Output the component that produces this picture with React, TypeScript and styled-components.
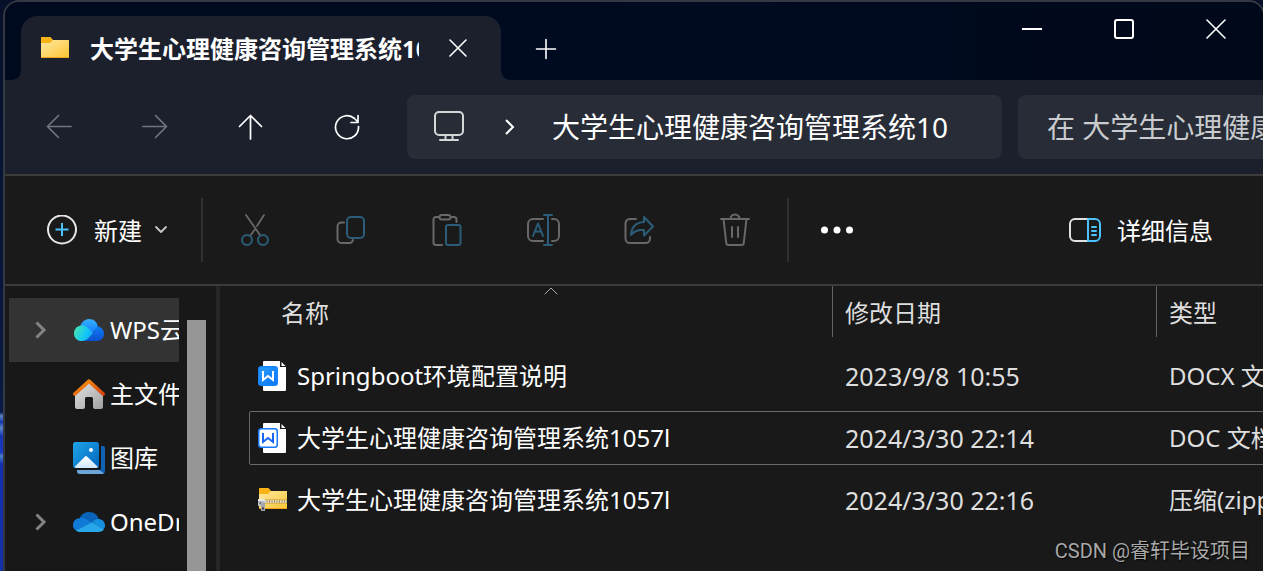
import React from "react";
import styled, { createGlobalStyle } from "styled-components";

const GlobalStyle = createGlobalStyle`
  *, *::before, *::after { box-sizing: border-box; }
  body {
    margin: 0;
    overflow: hidden;
    background: #071433;
    color: #ffffff;
    font-family: "Noto Sans", "Noto Sans CJK SC", sans-serif;
    font-size: 24px;
    line-height: 32px;
  }
  button, input {
    font: inherit;
    color: inherit;
    background: none;
    border: 0;
    padding: 0;
    margin: 0;
  }
  svg { display: block; flex: none; }
`;

const Desktop = styled.div`
  display: flex;
  min-height: 100vh;
  padding-left: 3px;
  overflow: hidden;
  background: linear-gradient(
    #061029 0, #08163a 300px, #0a1a44 412px, #5b86c4 416px, #1634b0 422px,
    #5b86c4 428px, #1634b4 436px, #1838c0 452px, #4a80cc 456px, #1230b0 464px, #1431a8 100%
  );
`;

const Window = styled.main`
  position: relative;
  flex: 1;
  min-width: 0;
  display: flex;
  flex-direction: column;
  margin-right: -2px;
  overflow: hidden;
  border: 2px solid #333843;
  border-bottom: 0;
  border-radius: 16px 16px 0 0;
  background: #191919;
`;

const TitleBar = styled.header`
  display: flex;
  align-items: flex-start;
  height: 78px;
  padding-left: 16px;
  background: linear-gradient(90deg, #000a1f, #000a20 60%, #000919);
`;

const Tab = styled.div`
  position: relative;
  display: flex;
  align-items: center;
  width: 480px;
  height: 64px;
  margin-top: 14px;
  padding-left: 19px;
  border-radius: 16px 16px 0 0;
  background: #1b202c;
  &::before, &::after {
    content: "";
    position: absolute;
    bottom: 0;
    width: 8px;
    height: 8px;
  }
  &::before {
    left: -8px;
    background: radial-gradient(circle at 0 0, transparent 7px, #1b202c 8px);
  }
  &::after {
    right: -8px;
    background: radial-gradient(circle at 100% 0, transparent 7px, #1b202c 8px);
  }
`;

const TabTitle = styled.span`
  width: 329px;
  margin-left: 20px;
  padding-top: 2px;
  overflow: hidden;
  white-space: nowrap;
  font-weight: 700;
`;

const IconButton = styled.button<{ $w: number; $h: number }>`
  display: flex;
  flex: none;
  align-items: center;
  justify-content: center;
  width: ${(p) => p.$w}px;
  height: ${(p) => p.$h}px;
`;

const NewTabSlot = styled.div`
  margin-top: 15px;
`;

const WindowControls = styled.div`
  display: flex;
  margin: 0 1px 0 auto;
`;

const NavBar = styled.nav`
  display: flex;
  align-items: center;
  height: 96px;
  padding-left: 6px;
  border-bottom: 2px solid #3b3b3b;
  background: #1b202c;
`;

const AddressBar = styled.div`
  display: flex;
  flex: 1;
  align-items: center;
  height: 64px;
  min-width: 0;
  margin: 0 16px 0 12px;
  padding-left: 24px;
  overflow: hidden;
  border-radius: 8px;
  background: #272c37;
`;

const Crumb = styled.button`
  font-size: 28px;
  white-space: nowrap;
`;

const SearchBox = styled.input`
  width: 245px;
  height: 64px;
  padding-left: 29px;
  border-radius: 8px 0 0 8px;
  background: #272c37;
  font-size: 28px;
  &::placeholder { color: #c9cbce; opacity: 1; }
`;

const Toolbar = styled.div`
  display: flex;
  align-items: center;
  height: 110px;
  padding: 0 50px 0 42px;
  border-bottom: 2px solid #3b3b3b;
  background: #1a1a1a;
`;

const LabelButton = styled.button`
  display: flex;
  align-items: center;
  gap: 16px;
  height: 64px;
  white-space: nowrap;
`;

const NewButton = styled(LabelButton)`
  gap: 12px;
  width: 154px;
`;

const DetailsButton = styled(LabelButton)`
  margin-left: auto;
`;

const ToolLabel = styled.span<{ $inset?: number }>`
  padding-top: 2px;
  padding-left: ${(p) => p.$inset ?? 0}px;
`;

const Separator = styled.i`
  flex: none;
  width: 2px;
  height: 64px;
  background: #303030;
`;

const Actions = styled.div`
  display: flex;
  margin: 0 4px;
`;

const Body = styled.div`
  display: flex;
  flex: 1;
  min-height: 0;
`;

const Sidebar = styled.aside`
  display: flex;
  flex: none;
  width: 215px;
  padding-left: 4px;
  border-right: 4px solid #262626;
  background: #181818;
`;

const SideList = styled.ul`
  width: 170px;
  margin: 0;
  padding: 12px 0 0;
  list-style: none;
`;

const SideItem = styled.li<{ $active?: boolean }>`
  display: flex;
  align-items: center;
  height: 64px;
  overflow: hidden;
  white-space: nowrap;
  background: ${(p) => (p.$active ? "#333333" : "transparent")};
`;

const ChevronSlot = styled.span`
  display: flex;
  flex: none;
  justify-content: center;
  width: 64px;
`;

const SideLink = styled.a`
  display: flex;
  align-items: center;
  gap: 5px;
  color: inherit;
  text-decoration: none;
`;

const ScrollThumb = styled.div`
  width: 19px;
  margin: 34px 0 0 8px;
  background: #969696;
`;

const FilePane = styled.section`
  flex: 1;
  min-width: 0;
  padding-left: 29px;
  overflow: hidden;
`;

const FileTable = styled.table`
  width: 1147px;
  margin-top: -8px;
  table-layout: fixed;
  border-collapse: separate;
  border-spacing: 0 8px;
  white-space: nowrap;
`;

const HeadCell = styled.th<{ $w: number }>`
  width: ${(p) => p.$w}px;
  height: 55px;
  padding: 0;
  vertical-align: top;
  text-align: left;
  font-weight: 400;
  color: #dedede;
`;

const HeadLabel = styled.div<{ $first?: boolean }>`
  position: relative;
  display: flex;
  align-items: center;
  height: 51px;
  margin-left: ${(p) => (p.$first ? 20 : 0)}px;
  padding: 2px 0 0 12px;
  border-left: ${(p) => (p.$first ? 0 : 1)}px solid #636363;
`;

const SortMark = styled.span`
  position: absolute;
  top: 0;
  left: 0;
  right: 0;
  display: flex;
  justify-content: center;
`;

const FileRow = styled.tr<{ $focused?: boolean }>`
  height: 54px;
  outline: ${(p) => (p.$focused ? "1px solid #696969" : "none")};
  outline-offset: -1px;
  border-radius: 2px;
`;

const Cell = styled.td<{ $numeric?: boolean }>`
  padding: 0 0 0 13px;
  font-size: ${(p) => (p.$numeric ? 25 : 24)}px;
  color: #dedede;
`;

const NameCell = styled.td`
  padding: 0 0 0 9px;
`;

const FileName = styled.div`
  display: flex;
  align-items: center;
  gap: 9px;
`;

const Watermark = styled.span`
  position: absolute;
  right: 13px;
  bottom: 4px;
  font-family: Roboto, "Noto Sans CJK SC", sans-serif;
  font-size: 20px;
  color: #a8a8a8;
  text-shadow: 1px 1px 1px #000000;
`;

type StrokeProps = {
  w: number;
  h: number;
  color?: string;
  sw?: number;
  children: React.ReactNode;
};

const Stroke = ({ w, h, color = "#ffffff", sw = 2, children }: StrokeProps) => (
  <svg
    width={w}
    height={h}
    viewBox={`0 0 ${w} ${h}`}
    fill="none"
    stroke={color}
    strokeWidth={sw}
    strokeLinecap="round"
    strokeLinejoin="round"
    aria-hidden="true"
  >
    {children}
  </svg>
);

const GREY = "#686868";
const BLUE = "#2b5d78";

const FolderShape = ({ id }: { id: string }) => (
  <>
    <defs>
      <linearGradient id={id} x1="0" y1="0" x2="1" y2="1">
        <stop offset="0" stopColor="#ffe9a6" />
        <stop offset="1" stopColor="#fcc430" />
      </linearGradient>
    </defs>
    <path d="M1 1.500q0-.5.5-.5h9l2.500 3h16v10H1z" fill="#f9b317" />
    <path d="M1 7h9l3-3h16v18H1z" fill={`url(#${id})`} />
    <path d="M1 21.500h28" stroke="#efa51c" strokeWidth="1" />
  </>
);

const FolderIcon = () => (
  <svg width="30" height="24" viewBox="0 0 30 24" aria-hidden="true">
    <FolderShape id="tabFolder" />
  </svg>
);

const ZipIcon = () => (
  <svg width="30" height="26" viewBox="0 0 30 26" aria-hidden="true">
    <FolderShape id="zipFolder" />
    <path d="M6 13h23M6 16h23" stroke="#c39a3c" strokeWidth="1" />
    <path d="M6 14.500h23" stroke="#efe9d4" strokeWidth="2" />
    <path d="M6 14.500h23" stroke="#8a8470" strokeWidth="2" strokeDasharray="1 1.500" />
    <path d="M0 12h7v7H0z" fill="#b9bcc0" />
    <path d="M0 12h7v2H0z" fill="#e6e7e9" />
    <path d="M1.500 15h2v2h-2z" fill="#6c6f73" />
    <path d="M3 16h4v8H3z" fill="#a3a6aa" />
    <path d="M4 20.500h2v2H4z" fill="#3c3f43" />
  </svg>
);

const DocIcon = ({ outlined }: { outlined?: boolean }) => (
  <svg width="30" height="32" viewBox="0 0 30 32" aria-hidden="true">
    <defs>
      <linearGradient id="docBadge" x1="0" y1="0" x2="1" y2="1">
        <stop offset="0" stopColor="#28a0ff" />
        <stop offset="1" stopColor="#0b72f5" />
      </linearGradient>
    </defs>
    <path d="M6 1H22v6h6v23a1 1 0 0 1-1 1H6a1 1 0 0 1-1-1V2a1 1 0 0 1 1-1z" fill="#ffffff" />
    <path d="M23.500 2l4 4h-4z" fill="#ffffff" />
    <rect
      x="0.750"
      y="6.750"
      width="18.500"
      height="18.500"
      rx="2.500"
      fill={outlined ? "#ffffff" : "url(#docBadge)"}
      stroke={outlined ? "#1677ff" : "#1784fb"}
      strokeWidth="1.500"
    />
    <path
      d="M5 11v9l5-4 5 4v-9"
      fill="none"
      stroke={outlined ? "#1b66ee" : "#ffffff"}
      strokeWidth="2"
    />
  </svg>
);

const CloudWps = () => (
  <svg width="32" height="24" viewBox="0 0 32 24" aria-hidden="true">
    <defs>
      <linearGradient id="wpsTop" x1="0" y1="0" x2="0" y2="1">
        <stop offset="0" stopColor="#35b2ff" />
        <stop offset="1" stopColor="#1478ff" />
      </linearGradient>
      <linearGradient id="wpsLeft" x1="0" y1="0.300" x2="1" y2="0.700">
        <stop offset="0" stopColor="#43e4b0" />
        <stop offset="0.600" stopColor="#14c8f5" />
        <stop offset="1" stopColor="#10a6ff" />
      </linearGradient>
      <linearGradient id="wpsRight" x1="0" y1="0" x2="0" y2="1">
        <stop offset="0" stopColor="#0d7df5" />
        <stop offset="1" stopColor="#0b4fd0" />
      </linearGradient>
    </defs>
    <path d="M7 8.500C8.500 4 12 1 16 1c5 0 8.500 3.500 8.800 8L18 16z" fill="url(#wpsTop)" />
    <path d="M10 23c8-1 10-11 14.500-14.500 4 .5 6.500 3.500 6.500 7.200 0 4.200-3 7.300-7.300 7.300z" fill="url(#wpsRight)" />
    <path d="M8.500 7.500c4 0 5.500 1.500 7.500 3.500l4 4C16.500 19 14.500 23 9 23c-5 0-8-3.300-8-7.600s3.300-7.900 7.500-7.900z" fill="url(#wpsLeft)" />
  </svg>
);

const OneDriveIcon = () => (
  <svg width="32" height="22" viewBox="0 0 32 22" aria-hidden="true">
    <path d="M6.500 7.500C8 3.500 11.500 1 16 1c5 0 8.500 2.800 9.600 7L19 12z" fill="#0a63b8" />
    <path d="M6.500 7.200c3-.4 5.500 0 8 1.700l5.500 3.200L3 19.500C1 18.200 0 16.500 0 14c0-3.800 2.800-6.600 6.500-6.800z" fill="#0f7bd6" />
    <path d="M25 8c4 0 7 2.700 7 6.500 0 1.500-.4 2.700-1.200 3.800L19 11.800C20.500 9.500 22.500 8 25 8z" fill="#1490df" />
    <path d="M19 11.500l11.900 6.700C29.800 20 28 21 25.500 21H7.500c-1.800 0-3.300-.5-4.700-1.500z" fill="#28a8ea" />
  </svg>
);

const HomeIcon = () => (
  <svg width="32" height="32" viewBox="0 0 32 32" aria-hidden="true">
    <defs>
      <linearGradient id="homeWall" x1="0" y1="0" x2="1" y2="1">
        <stop offset="0" stopColor="#e4e4e4" />
        <stop offset="1" stopColor="#a2a2a2" />
      </linearGradient>
      <linearGradient id="homeRoof" x1="0" y1="0" x2="1" y2="1">
        <stop offset="0" stopColor="#f7960e" />
        <stop offset="1" stopColor="#d8430c" />
      </linearGradient>
    </defs>
    <path d="M2 14L16 3l14 11v15a2 2 0 0 1-2 2h-6a2 2 0 0 1-2-2V20.500a1.500 1.500 0 0 0-1.500-1.500h-5a1.500 1.500 0 0 0-1.500 1.500V29a2 2 0 0 1-2 2H4a2 2 0 0 1-2-2z" fill="url(#homeWall)" />
    <path d="M1.800 16L16 3.200 30.200 16" fill="none" stroke="url(#homeRoof)" strokeWidth="3.600" strokeLinecap="round" strokeLinejoin="round" />
  </svg>
);

const GalleryIcon = () => (
  <svg width="32" height="32" viewBox="0 0 32 32" aria-hidden="true">
    <defs>
      <linearGradient id="galSky" x1="0" y1="0" x2="1" y2="1">
        <stop offset="0" stopColor="#1fa5e8" />
        <stop offset="1" stopColor="#0464bd" />
      </linearGradient>
      <linearGradient id="galHill" x1="0" y1="0" x2="0" y2="1">
        <stop offset="0" stopColor="#ffffff" />
        <stop offset="1" stopColor="#cfe8fb" />
      </linearGradient>
    </defs>
    <path d="M28 4h2a2 2 0 0 1 2 2v23a3 3 0 0 1-3 3H7a3 3 0 0 1-3-3v-1h22a2 2 0 0 0 2-2z" fill="#0f62b3" />
    <path d="M4 28h22l5 3.200a3 3 0 0 1-2 .8H7a3 3 0 0 1-3-3z" fill="#6ea5d8" />
    <rect width="26" height="26" rx="2.500" fill="url(#galSky)" />
    <path d="M1.500 25L12 14.500a1.500 1.500 0 0 1 2 0L25 25a3 3 0 0 1-1.500 1h-20a3 3 0 0 1-2-1z" fill="url(#galHill)" />
    <circle cx="18" cy="8" r="2" fill="#ffffff" />
  </svg>
);

const SideChevron = () => (
  <Stroke w={14} h={20} color="#828282" sw={3}>
    <path d="M2.500 2.500L10 10l-7.500 7.500" strokeLinecap="butt" strokeLinejoin="miter" />
  </Stroke>
);

const actions = [
  {
    label: "剪切",
    icon: (
      <Stroke w={32} h={34} color={GREY} sw={2}>
        <path d="M7 2l14 20M25 2l-7 11M15.500 17L11 23" strokeWidth="1.800" />
        <circle cx="8" cy="27" r="5" stroke={BLUE} />
        <circle cx="24" cy="27" r="5" stroke={BLUE} />
      </Stroke>
    ),
  },
  {
    label: "复制",
    icon: (
      <Stroke w={32} h={32} color={GREY}>
        <path d="M9 8.500H6.500a4 4 0 0 0-4 4V25a4 4 0 0 0 4 4H14a4 4 0 0 0 4-3" />
        <rect x="12" y="3" width="17" height="21" rx="4" stroke={BLUE} />
      </Stroke>
    ),
  },
  {
    label: "粘贴",
    icon: (
      <Stroke w={32} h={34} color={GREY}>
        <path d="M8 4H5a2.500 2.500 0 0 0-2.500 2.500v23A2.500 2.500 0 0 0 5 32h6M20 4h3a2.500 2.500 0 0 1 2.500 2.500V9" />
        <rect x="8.500" y="2" width="11" height="4.500" rx="2.200" />
        <rect x="15" y="12" width="14.500" height="20" rx="2" stroke={BLUE} />
      </Stroke>
    ),
  },
  {
    label: "重命名",
    icon: (
      <Stroke w={34} h={34} color={GREY}>
        <path d="M17 6H7a5 5 0 0 0-5 5v12a5 5 0 0 0 5 5h10M26 6h2a5 5 0 0 1 5 5v12a5 5 0 0 1-5 5h-2" />
        <path d="M22 2v30M18 2h8M18 32h8M7 23l5-12.500L17 23M9 18.500h6" stroke={BLUE} />
      </Stroke>
    ),
  },
  {
    label: "共享",
    icon: (
      <Stroke w={32} h={34} color={GREY}>
        <path d="M13 6H7a4.500 4.500 0 0 0-4.500 4.500v15A4.500 4.500 0 0 0 7 30h15.500a4.500 4.500 0 0 0 4.500-4.500V24" />
        <path d="M21 4l9 9.500-9 9v-5.500c-5.500-.5-10 1-13 5 .5-7.500 5-12.500 13-13z" stroke={BLUE} />
      </Stroke>
    ),
  },
  {
    label: "删除",
    icon: (
      <Stroke w={32} h={34} color={GREY}>
        <path d="M2 6h28M11.500 6a4.500 4.500 0 0 1 9 0M4.500 6l2.700 23.500A2.500 2.500 0 0 0 9.700 32h12.600a2.500 2.500 0 0 0 2.500-2.500L27.500 6M13 14v10M19 14v10" />
      </Stroke>
    ),
  },
];

const places = [
  { name: "WPS云盘", icon: <CloudWps />, expandable: true, active: true },
  { name: "主文件夹", icon: <HomeIcon /> },
  { name: "图库", icon: <GalleryIcon /> },
  { name: "OneDrive", icon: <OneDriveIcon />, expandable: true },
];

const files = [
  { name: "Springboot环境配置说明", date: "2023/9/8 10:55", type: "DOCX 文档", icon: <DocIcon /> },
  { name: "大学生心理健康咨询管理系统1057l", date: "2024/3/30 22:14", type: "DOC 文档", icon: <DocIcon outlined />, focused: true },
  { name: "大学生心理健康咨询管理系统1057l", date: "2024/3/30 22:16", type: "压缩(zipped)文件夹", icon: <ZipIcon /> },
];

export default function App() {
  return (
    <>
      <GlobalStyle />
      <Desktop>
        <Window>
          <TitleBar>
            <Tab>
              <FolderIcon />
              <TabTitle>大学生心理健康咨询管理系统10</TabTitle>
              <IconButton $w={78} $h={64} aria-label="关闭标签页">
                <Stroke w={20} h={20} sw={1.6}>
                  <path d="M2 2l16 16M18 2L2 18" />
                </Stroke>
              </IconButton>
            </Tab>
            <NewTabSlot>
              <IconButton $w={90} $h={64} aria-label="新建标签页">
                <Stroke w={22} h={22} sw={1.6}>
                  <path d="M11 1.500v19M1.500 11h19" />
                </Stroke>
              </IconButton>
            </NewTabSlot>
            <WindowControls>
              <IconButton $w={92} $h={54} aria-label="最小化">
                <Stroke w={22} h={22}>
                  <path d="M1 11h20" strokeLinecap="butt" />
                </Stroke>
              </IconButton>
              <IconButton $w={92} $h={54} aria-label="最大化">
                <Stroke w={22} h={22}>
                  <rect x="2" y="2" width="18" height="18" rx="2" />
                </Stroke>
              </IconButton>
              <IconButton $w={92} $h={54} aria-label="关闭">
                <Stroke w={22} h={22} sw={1.6}>
                  <path d="M2 2l18 18M20 2L2 20" />
                </Stroke>
              </IconButton>
            </WindowControls>
          </TitleBar>

          <NavBar>
            <IconButton $w={96} $h={64} aria-label="后退">
              <Stroke w={26} h={26} color="#70747d" sw={1.7}>
                <path d="M25 12.500H2M12.500 1.500l-11 11 11 11" />
              </Stroke>
            </IconButton>
            <IconButton $w={96} $h={64} aria-label="前进">
              <Stroke w={26} h={26} color="#70747d" sw={1.7}>
                <path d="M1 12.500h23M13.500 1.500l11 11-11 11" />
              </Stroke>
            </IconButton>
            <IconButton $w={96} $h={64} aria-label="向上">
              <Stroke w={26} h={26} sw={1.7}>
                <path d="M12.500 25V2M1.500 12.500l11-11 11 11" />
              </Stroke>
            </IconButton>
            <IconButton $w={96} $h={64} aria-label="刷新">
              <Stroke w={26} h={26} sw={1.7}>
                <path d="M24.500 12.500A11.500 11.500 0 1 1 20.500 4.500l3.500 3.500M24 1.500v7h-7" />
              </Stroke>
            </IconButton>
            <AddressBar>
              <Stroke w={36} h={34} color="#d5d6d8" sw={2}>
                <rect x="4" y="2" width="28" height="23" rx="4" />
                <path d="M9 30h18M14.500 25v5M21.500 25v5" />
              </Stroke>
              <IconButton $w={85} $h={64} aria-label="展开路径">
                <Stroke w={12} h={18}>
                  <path d="M2 2l7 7-7 7" strokeLinecap="butt" strokeLinejoin="miter" />
                </Stroke>
              </IconButton>
              <Crumb>大学生心理健康咨询管理系统10</Crumb>
            </AddressBar>
            <SearchBox aria-label="搜索" placeholder="在 大学生心理健康咨询管理系统10 中搜索" />
          </NavBar>

          <Toolbar>
            <NewButton>
              <Stroke w={30} h={30} color="#e6e6e6">
                <circle cx="15" cy="14.500" r="14" />
                <path d="M15 8v13M8.500 14.500h13" stroke="#4cc2ff" strokeLinecap="butt" />
              </Stroke>
              <ToolLabel $inset={5}>新建</ToolLabel>
              <Stroke w={14} h={10} color="#c8c8c8" sw={1.8}>
                <path d="M2 2l5 5 5-5" />
              </Stroke>
            </NewButton>
            <Separator />
            <Actions>
              {actions.map((a) => (
                <IconButton key={a.label} $w={96} $h={64} aria-label={a.label}>
                  {a.icon}
                </IconButton>
              ))}
            </Actions>
            <Separator />
            <IconButton $w={96} $h={64} aria-label="更多">
              <svg width="34" height="8" viewBox="0 0 34 8" fill="#ffffff" aria-hidden="true">
                <circle cx="4.500" cy="4" r="3.500" />
                <circle cx="17" cy="4" r="3.500" />
                <circle cx="29.500" cy="4" r="3.500" />
              </svg>
            </IconButton>
            <DetailsButton>
              <Stroke w={32} h={26} color="#e0e0e0">
                <path d="M19 2H6a5 5 0 0 0-5 5v12a5 5 0 0 0 5 5h13" />
                <path d="M19 2h7a5 5 0 0 1 5 5v12a5 5 0 0 1-5 5h-7zM23 10h4M23 14h4M23 18h4" stroke="#4cc2ff" />
              </Stroke>
              <ToolLabel>详细信息</ToolLabel>
            </DetailsButton>
          </Toolbar>

          <Body>
            <Sidebar>
              <SideList>
                {places.map((p) => (
                  <SideItem key={p.name} $active={p.active}>
                    <ChevronSlot>{p.expandable && <SideChevron />}</ChevronSlot>
                    <SideLink href="#">
                      {p.icon}
                      {p.name}
                    </SideLink>
                  </SideItem>
                ))}
              </SideList>
              <ScrollThumb />
            </Sidebar>
            <FilePane>
              <FileTable>
                <thead>
                  <tr>
                    <HeadCell $w={583} scope="col">
                      <HeadLabel $first>
                        名称
                        <SortMark>
                          <Stroke w={16} h={10} color="#a8a8a8" sw={1}>
                            <path d="M2 8l6-6 6 6" />
                          </Stroke>
                        </SortMark>
                      </HeadLabel>
                    </HeadCell>
                    <HeadCell $w={324} scope="col">
                      <HeadLabel>修改日期</HeadLabel>
                    </HeadCell>
                    <HeadCell $w={240} scope="col">
                      <HeadLabel>类型</HeadLabel>
                    </HeadCell>
                  </tr>
                </thead>
                <tbody>
                  {files.map((f) => (
                    <FileRow key={f.date} $focused={f.focused}>
                      <NameCell>
                        <FileName>
                          {f.icon}
                          {f.name}
                        </FileName>
                      </NameCell>
                      <Cell $numeric>{f.date}</Cell>
                      <Cell>{f.type}</Cell>
                    </FileRow>
                  ))}
                </tbody>
              </FileTable>
            </FilePane>
          </Body>
          <Watermark>CSDN @睿轩毕设项目</Watermark>
        </Window>
      </Desktop>
    </>
  );
}
